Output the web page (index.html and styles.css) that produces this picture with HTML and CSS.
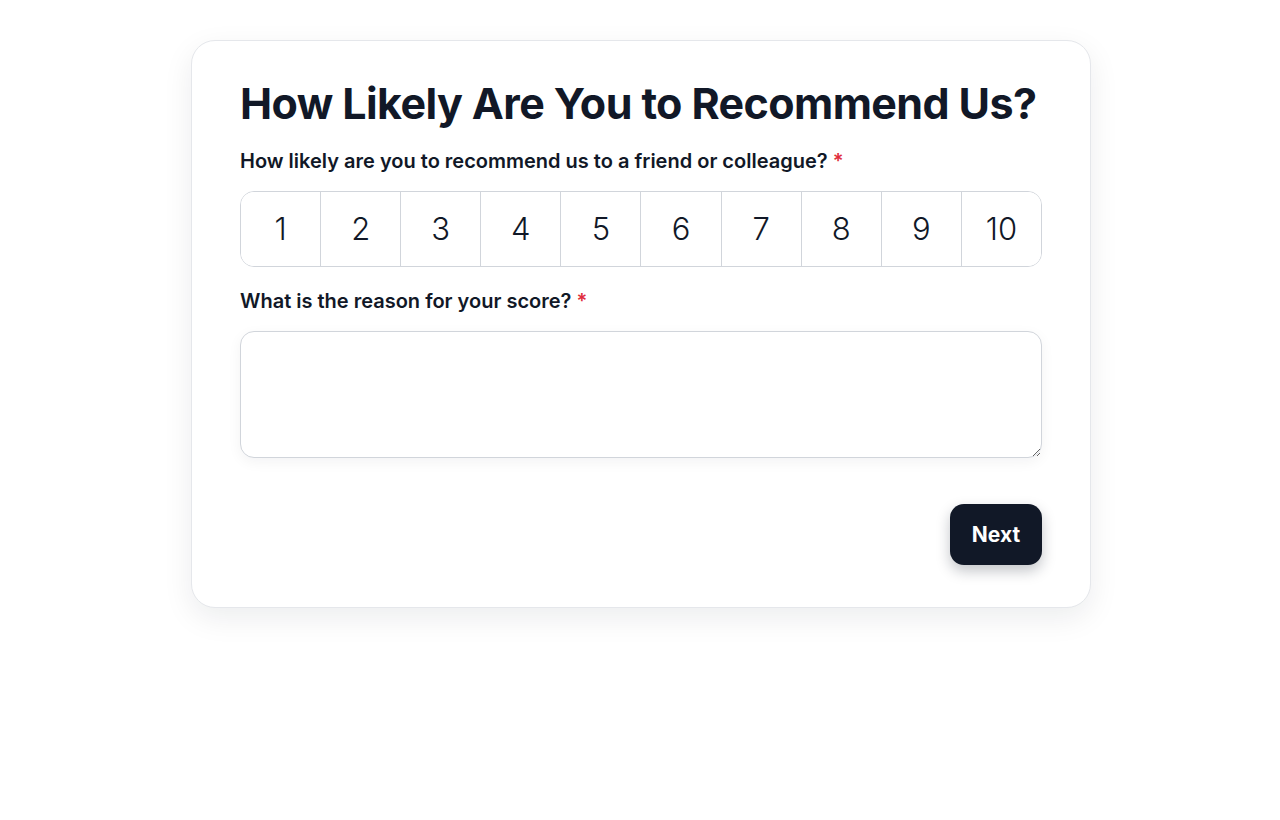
FILE: index.html
```html
<!DOCTYPE html>
<html>
    <head>
        <meta charset="utf-8">
        <title>NPS survey</title>

        <link rel="stylesheet" href="styles.css">
    </head>
    <body>

        <div class="page-wrapper">
            <form class="survey-card">
                <h1 class="survey-title">How Likely Are You to Recommend Us?</h1>

                <label class="question">How likely are you to recommend us to a friend or colleague? <span class="required">*</span></label>

                <div class="scale">
                    <button type="button" class="scale-item">1</button>
                    <button type="button" class="scale-item">2</button>
                    <button type="button" class="scale-item">3</button>
                    <button type="button" class="scale-item">4</button>
                    <button type="button" class="scale-item">5</button>
                    <button type="button" class="scale-item">6</button>
                    <button type="button" class="scale-item">7</button>
                    <button type="button" class="scale-item">8</button>
                    <button type="button" class="scale-item">9</button>
                    <button type="button" class="scale-item">10</button>
                </div>

                <label class="question" for="reason">What is the reason for your score? <span class="required">*</span></label>

                <textarea class="reason" id="reason"></textarea>

                <div class="actions">
                    <button type="button" class="next-button">Next</button>
                </div>
            </form>
        </div>

    </body>
</html>
```

FILE: styles.css
```css
/* Page */

body {
    margin: 0;
    background: #ffffff;
    font-family: Inter, "Noto Sans", sans-serif;
    color: #111827;
}

.page-wrapper {
    display: flex;
    justify-content: center;
    padding: 40px 0 120px 2px; /* room for the card shadow */
}

/* Card */

.survey-card {
    display: flex;
    flex-direction: column;
    box-sizing: border-box;
    width: 900px;
    padding: 34px 48px 42px;
    border: 1px solid #e5e7eb;
    border-radius: 24px;
    background: #ffffff;
    box-shadow: 0 10px 30px rgba(17, 24, 39, 0.08);
}

.survey-title {
    margin: 0 0 16px;
    font-size: 43px;
    font-weight: 700;
    line-height: 56px;
    letter-spacing: -0.6px;
    white-space: nowrap;
}

.question {
    display: block;
    margin-bottom: 16px;
    font-size: 20px;
    font-weight: 600;
    line-height: 28px;
}

.required {
    color: #e02d3c;
}

/* Rating scale */

.scale {
    display: flex;
    margin-bottom: 20px;
    border: 1px solid #d1d5db;
    border-radius: 14px;
    overflow: hidden; /* keeps the corners of first and last item round */
}

.scale-item {
    flex: 1;
    height: 74px;
    padding: 0 0 2px;
    border: 0;
    border-left: 1px solid #d1d5db;
    background: #ffffff;
    font-family: inherit;
    font-size: 31px;
    font-weight: 300;
    color: #111827;
}

.scale-item:first-child {
    border-left: 0;
}

/* Reason */

.reason {
    box-sizing: border-box;
    height: 127px;
    margin-bottom: 46px;
    border: 1px solid #d1d5db;
    border-radius: 14px;
    padding: 12px 16px;
    font-family: inherit;
    font-size: 18px;
    box-shadow: 0 4px 14px rgba(17, 24, 39, 0.05);
}

/* Next */

.actions {
    display: flex;
    justify-content: flex-end;
}

.next-button {
    width: 92px;
    height: 61px;
    border: 0;
    border-radius: 14px;
    background: #111827;
    color: #ffffff;
    font-family: inherit;
    font-size: 21px;
    font-weight: 700;
    box-shadow: 0 6px 14px rgba(17, 24, 39, 0.25);
}
```
